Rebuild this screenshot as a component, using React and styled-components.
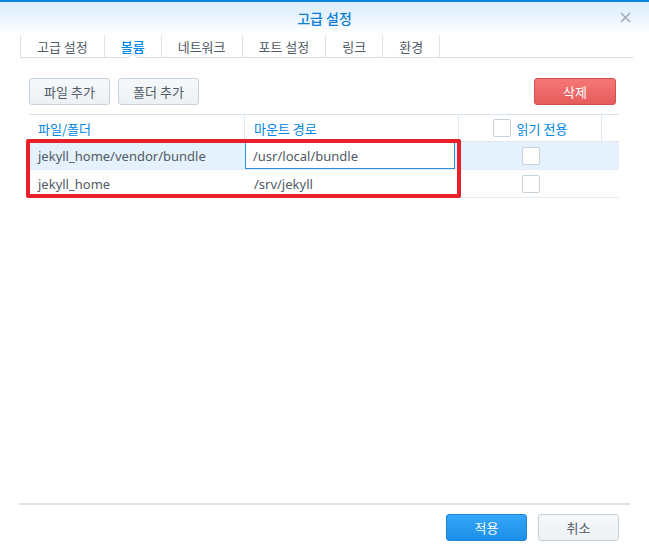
import React from 'react';
import styled, { createGlobalStyle, css } from 'styled-components';

const GlobalStyle = createGlobalStyle`
  html, body {
    margin: 0;
    padding: 0;
    background: #fff;
  }
  body {
    font-family: "Noto Sans", "Noto Sans CJK KR", sans-serif;
    font-size: 12px;
    color: #505a64;
  }
  * { box-sizing: border-box; }
`;

const Dialog = styled.div`
  width: 649px;
  height: 549px;
  display: flex;
  flex-direction: column;
  border-top: 2px solid #0a86e0;
  background: #fff;
`;

const Header = styled.div`
  height: 31px;
  display: grid;
  grid-template-columns: 1fr auto 1fr;
  align-items: center;
  background: linear-gradient(to bottom, #d9ecfb 0%, #eef6fd 60%, #ffffff 100%);
`;

const Title = styled.div`
  grid-column: 2;
  font-family: "Noto Sans CJK KR", sans-serif;
  font-size: 14px;
  font-weight: 500;
  color: #0b7fd6;
  padding-top: 1px;
`;

const CloseButton = styled.div`
  grid-column: 3;
  justify-self: end;
  margin-right: 18px;
  width: 12px;
  height: 12px;
  display: flex;
  align-items: center;
  justify-content: center;
`;

const TabBar = styled.div`
  display: flex;
  margin: 2px 16px 0 20px;
  height: 23px;
  border-bottom: 1px solid #d9dee3;
`;

const Tab = styled.div`
  position: relative;
  padding: 0 16px;
  display: flex;
  align-items: center;
  border-left: 1px solid #dde3e9;
  font-family: "Noto Sans CJK KR", sans-serif;
  font-size: 13px;
  color: #505a64;
  &:last-child { border-right: 1px solid #dde3e9; }
  ${p => p.active && css`
    color: #0086e5;
    font-weight: 500;
    &::after {
      content: '';
      position: absolute;
      left: 50%;
      bottom: -5px;
      width: 7px;
      height: 7px;
      margin-left: -4px;
      background: #fff;
      border-left: 1px solid #d9dee3;
      border-top: 1px solid #d9dee3;
      transform: rotate(45deg);
    }
  `}
`;

const Content = styled.div`
  flex: 1;
  padding: 20px 30px 0 29px;
  display: flex;
  flex-direction: column;
`;

const Toolbar = styled.div`
  display: flex;
  align-items: center;
  gap: 8px;
  margin: 0 3px 9px 0;
`;

const Spacer = styled.div`
  flex: 1;
`;

const Button = styled.button`
  height: 27px;
  min-width: ${p => p.width || 81}px;
  padding: 0 12px;
  border-radius: 3px;
  font-family: "Noto Sans CJK KR", sans-serif;
  font-size: 13px;
  cursor: pointer;
  border: 1px solid #c8d2dc;
  background: linear-gradient(to bottom, #f6f8fa, #edf1f5);
  color: #505a64;
  ${p => p.variant === 'danger' && css`
    border-color: #d24f50;
    background: linear-gradient(to bottom, #f67777, #e65c5c);
    color: #fff;
  `}
  ${p => p.variant === 'primary' && css`
    border-color: #1a86dc;
    background: linear-gradient(to bottom, #35a6f7, #1b8fe8);
    color: #fff;
  `}
`;

const TableWrap = styled.div`
  position: relative;
  width: 590px;
`;

const Grid = styled.div`
  display: grid;
  grid-template-columns: 216px 214px 143px 1fr;
  border-top: 1px solid #d8e2ec;
`;

const HeadCell = styled.div`
  height: 27px;
  display: flex;
  align-items: center;
  justify-content: ${p => (p.center ? 'center' : 'flex-start')};
  gap: 6px;
  padding-left: ${p => (p.center ? 0 : 9)}px;
  border-bottom: 1px solid #e0e8ef;
  border-right: ${p => (p.last ? 'none' : '1px solid #e0e8ef')};
  font-family: "Noto Sans CJK KR", sans-serif;
  font-size: 13px;
  color: #0086e5;
`;

const Cell = styled.div`
  height: 28px;
  display: flex;
  align-items: center;
  justify-content: ${p => (p.center ? 'center' : 'flex-start')};
  padding-left: ${p => (p.center ? 0 : 9)}px;
  background: ${p => (p.selected ? '#e5f2fd' : '#fff')};
  border-bottom: 1px solid #e6ebf0;
  font-size: 13px;
  color: #505a64;
`;

const EditInput = styled.div`
  width: 210px;
  height: 100%;
  margin-left: -9px;
  padding-left: 7px;
  display: flex;
  align-items: center;
  background: #fff;
  border: 1px solid #2a8fe0;
`;

const Checkbox = styled.span`
  display: inline-block;
  width: 18px;
  height: 18px;
  border: 1px solid #c7d1dc;
  border-radius: 2px;
  background: #fff;
`;

const Highlight = styled.div`
  position: absolute;
  left: -3px;
  top: 25px;
  width: 435px;
  height: 59px;
  border: 4px solid #e8202a;
  border-radius: 2px;
  pointer-events: none;
`;

const Footer = styled.div`
  margin: 0 19px;
  border-top: 2px solid #e2e2e2;
  padding: 9px 11px 8px 0;
  display: flex;
  justify-content: flex-end;
  gap: 11px;
`;

const rows = [
  { source: 'jekyll_home/vendor/bundle', mount: '/usr/local/bundle', selected: true },
  { source: 'jekyll_home', mount: '/srv/jekyll', selected: false },
];

const tabs = ['고급 설정', '볼륨', '네트워크', '포트 설정', '링크', '환경'];

export default function App() {
  return (
    <>
      <GlobalStyle />
      <Dialog>
        <Header>
          <Title>고급 설정</Title>
          <CloseButton>
            <svg width="11" height="11" viewBox="0 0 11 11">
              <path d="M1 1L10 10M10 1L1 10" stroke="#a3adb7" strokeWidth="1.6" />
            </svg>
          </CloseButton>
        </Header>
        <TabBar>
          {tabs.map(t => (
            <Tab key={t} active={t === '볼륨'}>{t}</Tab>
          ))}
        </TabBar>
        <Content>
          <Toolbar>
            <Button>파일 추가</Button>
            <Button>폴더 추가</Button>
            <Spacer />
            <Button variant="danger" width={82}>삭제</Button>
          </Toolbar>
          <TableWrap>
            <Grid>
              <HeadCell>파일/폴더</HeadCell>
              <HeadCell>마운트 경로</HeadCell>
              <HeadCell center>
                <Checkbox />
                읽기 전용
              </HeadCell>
              <HeadCell last />
              {rows.map(r => (
                <React.Fragment key={r.source}>
                  <Cell selected={r.selected}>{r.source}</Cell>
                  <Cell selected={r.selected}>
                    {r.selected ? <EditInput>{r.mount}</EditInput> : r.mount}
                  </Cell>
                  <Cell selected={r.selected} center>
                    <Checkbox />
                  </Cell>
                  <Cell selected={r.selected} />
                </React.Fragment>
              ))}
            </Grid>
            <Highlight />
          </TableWrap>
        </Content>
        <Footer>
          <Button variant="primary">적용</Button>
          <Button>취소</Button>
        </Footer>
      </Dialog>
    </>
  );
}
